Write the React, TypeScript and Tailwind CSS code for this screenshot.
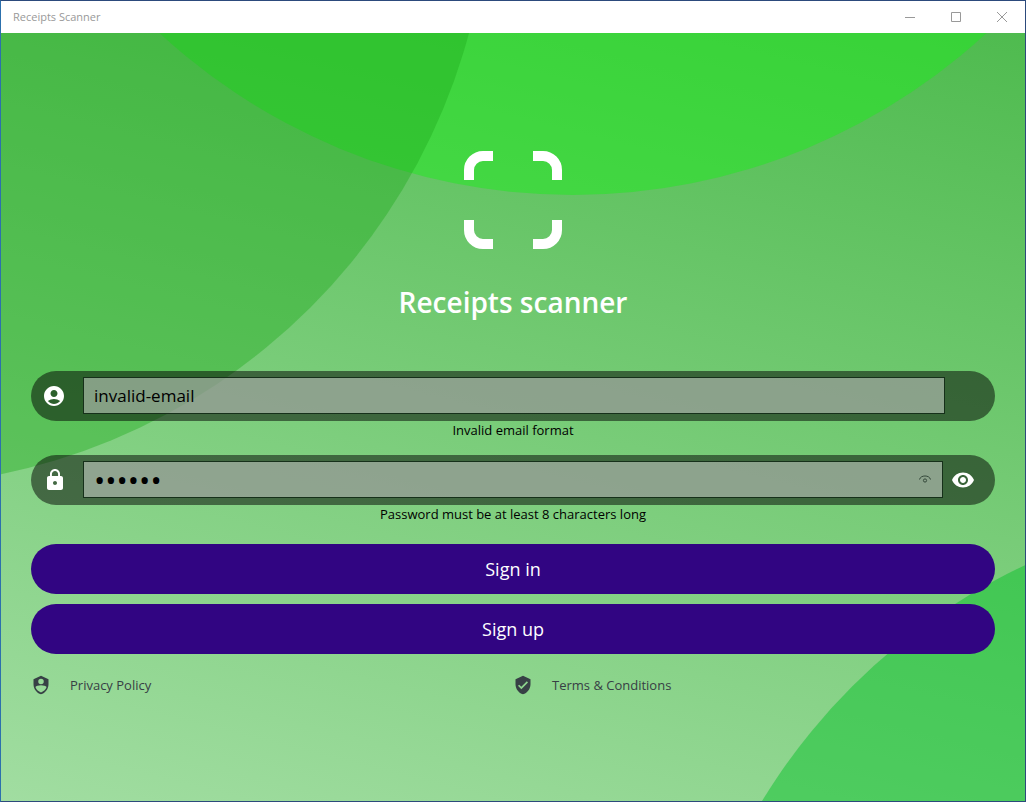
import { useState } from "react";
import { MdAccountCircle, MdLock, MdRemoveRedEye, MdVerifiedUser } from "react-icons/md";

function Backdrop() {
  return (
    <svg
      aria-hidden="true"
      className="absolute inset-0 h-full w-full"
      viewBox="0 0 1024 768"
      preserveAspectRatio="xMidYMid slice"
    >
      <circle cx="572" cy="-447" r="609" fill="rgb(32 234 32 / 0.5)" />
      <circle cx="-124" cy="-159" r="613" fill="rgb(29 170 28 / 0.4)" />
      <circle cx="1285" cy="1088" r="614" fill="rgb(12 194 46 / 0.5)" />
    </svg>
  );
}

function ScanLogo() {
  return (
    <svg aria-hidden="true" className="size-[100px]" viewBox="0 0 100 100" fill="none" stroke="#fff" strokeWidth="10">
      <path d="M6 30V20A14 14 0 0 1 20 6H30" />
      <path d="M70 6H80A14 14 0 0 1 94 20V30" />
      <path d="M94 70V80A14 14 0 0 1 80 94H70" />
      <path d="M30 94H20A14 14 0 0 1 6 80V70" />
    </svg>
  );
}

function TitleBar() {
  return (
    <header className="flex h-8 shrink-0 items-center justify-between bg-white text-[#999]">
      <span className="pl-3 text-[11px]">Receipts Scanner</span>
      <div className="flex h-full">
        <button type="button" aria-label="Minimize" className="flex w-[46px] items-center justify-center">
          <svg className="size-[10px]" viewBox="0 0 10 10" stroke="currentColor">
            <path d="M0 5.5H10" />
          </svg>
        </button>
        <button type="button" aria-label="Maximize" className="flex w-[46px] items-center justify-center">
          <svg className="size-[10px]" viewBox="0 0 10 10" stroke="currentColor" fill="none">
            <path d="M.5 .5H9.5V9.5H.5Z" />
          </svg>
        </button>
        <button type="button" aria-label="Close" className="flex w-[46px] items-center justify-center">
          <svg className="size-[10px]" viewBox="0 0 10 10" stroke="currentColor">
            <path d="M0 0L10 10M10 0L0 10" />
          </svg>
        </button>
      </div>
    </header>
  );
}

export default function App() {
  const [email, setEmail] = useState("invalid-email");
  const [password, setPassword] = useState("secret");
  const [shown, setShown] = useState(false);

  return (
    <div className="flex min-h-screen flex-col border border-[#2c4a7c] border-l-[#2c70ad] font-['Open_Sans','Noto_Sans',sans-serif]">
      <TitleBar />
      <main className="relative grow overflow-hidden bg-[linear-gradient(194deg,#4fbb4f,#a1dda1)]">
        <Backdrop />
        <form className="relative flex flex-col px-[30px] pt-[117px]" onSubmit={(e) => e.preventDefault()}>
          <div className="flex flex-col items-center">
            <ScanLogo />
            <h1 className="mt-8 text-[28px] leading-10 font-semibold text-white">Receipts scanner</h1>
          </div>

          <div className="mt-[49px] flex h-[50px] items-center rounded-full bg-black/50 pr-[50px] pb-px">
            <label htmlFor="email" aria-label="Email" className="w-[52px] pl-[11px] text-white">
              <MdAccountCircle className="size-6" aria-hidden="true" />
            </label>
            <input
              id="email"
              type="text"
              aria-label="Email"
              value={email}
              onChange={(e) => setEmail(e.target.value)}
              className="h-[37px] min-w-0 grow border border-[#16301a] bg-[#dde0dd]/50 px-[10px] text-[17px] text-black outline-none"
            />
          </div>
          <p className="h-[34px] text-center text-[13px] leading-[18px] text-black">Invalid email format</p>

          <div className="flex h-[50px] items-center rounded-full bg-black/50 pr-5 pb-px">
            <label htmlFor="password" aria-label="Password" className="w-[52px] pl-3 text-white">
              <MdLock className="size-6" aria-hidden="true" />
            </label>
            <div className="flex h-[37px] min-w-0 grow items-center border border-[#16301a] bg-[#dde0dd]/50 pr-[11px] pl-[10px]">
              <input
                id="password"
                type={shown ? "text" : "password"}
                aria-label="Password"
                value={password}
                onChange={(e) => setPassword(e.target.value)}
                className={
                  shown
                    ? "h-[35px] min-w-0 grow bg-transparent text-[17px] text-black outline-none"
                    : "h-[35px] min-w-0 grow bg-transparent text-[30px] text-black outline-none"
                }
              />
              <button type="button" aria-label="Peek at password">
                <svg className="size-3" viewBox="0 0 12 12" fill="none" stroke="#34483a">
                  <path d="M.5 5.5C1.5 .8 10.5 .8 11.5 5.5" />
                  <circle cx="6" cy="6.5" r="1.6" />
                </svg>
              </button>
            </div>
            <button
              type="button"
              aria-label="Show password"
              className="ml-2 text-white"
              onClick={() => setShown(!shown)}
            >
              <MdRemoveRedEye className="size-6" />
            </button>
          </div>
          <p className="h-[39px] text-center text-[13px] leading-[18px] text-black">
            Password must be at least 8 characters long
          </p>

          <div className="flex flex-col gap-[10px]">
            <button type="submit" className="h-[50px] rounded-full bg-[#310582] text-[18px] text-white">
              Sign in
            </button>
            <button type="button" className="h-[50px] rounded-full bg-[#310582] text-[18px] text-white">
              Sign up
            </button>
          </div>

          <div className="mt-[21px] grid grid-cols-2 text-[13px] leading-5 text-[#374045]">
            <a href="#privacy" className="flex items-center gap-[19px]">
              <svg className="size-5" viewBox="0 0 24 24" fill="currentColor" aria-hidden="true">
                <path
                  fillRule="evenodd"
                  d="M12 1 3 5v6c0 5.550 3.840 10.740 9 12 5.160-1.260 9-6.450 9-12V5l-9-4Zm0 3.600a3.300 3.300 0 1 1 0 6.600 3.300 3.300 0 0 1 0-6.600Zm0 7.800c3.200 0 5.700 .9 6.700 2.100C17.400 17.800 15 20 12 20.900 9 20 6.600 17.800 5.300 14.500 6.300 13.300 8.800 12.400 12 12.400Z"
                />
              </svg>
              Privacy Policy
            </a>
            <a href="#terms" className="flex items-center gap-[19px]">
              <MdVerifiedUser className="size-5" aria-hidden="true" />
              Terms &amp; Conditions
            </a>
          </div>
        </form>
      </main>
    </div>
  );
}
